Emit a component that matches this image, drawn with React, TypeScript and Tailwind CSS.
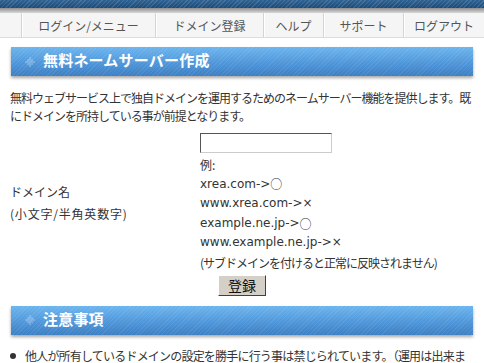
import React from 'react';

const navItems = [
  { label: 'ログイン/メニュー', w: 'w-[134px]' },
  { label: 'ドメイン登録', w: 'w-[108px]' },
  { label: 'ヘルプ', w: 'w-[60px]' },
  { label: 'サポート', w: 'w-[80px]' },
  { label: 'ログアウト', w: 'w-[81px]' },
];

const examples = [
  { text: 'xrea.com->', mark: '○' },
  { text: 'www.xrea.com->', mark: '×' },
  { text: 'example.ne.jp->', mark: '○' },
  { text: 'www.example.ne.jp->', mark: '×' },
];

const DotIcon: React.FC = () => (
  <svg width="10" height="10" viewBox="0 0 10 10" className="shrink-0">
    {[
      [5, 1], [3, 3], [5, 3], [7, 3], [1, 5], [3, 5], [5, 5], [7, 5], [9, 5], [3, 7], [5, 7], [7, 7], [5, 9],
    ].map(([x, y], i) => (
      <rect key={i} x={x - 0.5} y={y - 0.5} width="1" height="1" fill="#e6f2fc" />
    ))}
  </svg>
);

const SectionTitle: React.FC<{ title: string }> = ({ title }) => (
  <div className="mx-[11px] h-[29px] flex items-center gap-[8px] pl-[14px] text-white font-bold text-[15px] shadow-[0_2px_3px_rgba(0,0,0,0.35)] bg-[repeating-linear-gradient(135deg,rgba(255,255,255,0.07)_0px,rgba(255,255,255,0.07)_1px,transparent_1px,transparent_3px),linear-gradient(to_bottom,#6db5ee,#4d94d8_60%,#3d7fc2)]">
    <DotIcon />
    <span className="tracking-[0.2px]">{title}</span>
  </div>
);

const App: React.FC = () => {
  return (
    <div className="w-[484px] h-[363px] overflow-hidden bg-white text-[#333] text-[12px] font-['DejaVu_Sans','Noto_Sans_CJK_JP',sans-serif]">
      {/* top band */}
      <div className="h-[8px] bg-[repeating-linear-gradient(135deg,rgba(255,255,255,0.12)_0px,rgba(255,255,255,0.12)_1px,transparent_1px,transparent_3px),linear-gradient(to_bottom,#2f6394,#1d4a77)]" />
      <div className="h-[5px] bg-[linear-gradient(to_bottom,#8f8f8f,#d8d8d8)]" />

      {/* nav */}
      <div className="h-[25px] flex bg-[#f5f5f5] border-b border-[#dcdcdc] text-[#555] font-['Noto_Sans_CJK_JP',sans-serif]">
        <div className="w-[21px]" />
        {navItems.map((n) => (
          <div
            key={n.label}
            className={`${n.w} flex items-center justify-center pt-[1px] border-l border-[#d4d4d4] shadow-[inset_1px_0_0_#ffffff]`}
          >
            {n.label}
          </div>
        ))}
      </div>

      <div className="h-[9px]" />
      <SectionTitle title="無料ネームサーバー作成" />

      <div className="px-[10px] pt-[13px] leading-[18px] tracking-[-1px] font-['Noto_Sans_CJK_JP',sans-serif]">
        <div className="whitespace-nowrap">
          無料ウェブサービス上で独自ドメインを運用するためのネームサーバー機能を提供します。既
        </div>
        <div className="whitespace-nowrap">にドメインを所持している事が前提となります。</div>
      </div>

      {/* form */}
      <div className="flex mt-[8px]">
        <div className="w-[200px] pl-[10px] flex flex-col justify-center leading-[22px] font-['Noto_Sans_CJK_JP',sans-serif]">
          <span>ドメイン名</span>
          <span className="tracking-[0.8px]">(小文字/半角英数字)</span>
        </div>
        <div className="flex flex-col">
          <input
            type="text"
            className="w-[132px] h-[20px] bg-white border border-t-[#555] border-l-[#555] border-b-[#ccc] border-r-[#ccc] outline-none"
          />
          <div className="leading-[19.6px] mt-[2px]">
            <div className="h-[19.6px] font-['Noto_Sans_CJK_JP',sans-serif]">例:</div>
            {examples.map((e) => (
              <div key={e.text} className="h-[19.6px] flex items-center">
                <span>{e.text}</span>
                {e.mark === '○' ? (
                  <span className="font-['Noto_Sans_CJK_JP',sans-serif] leading-none">○</span>
                ) : (
                  <span>×</span>
                )}
              </div>
            ))}
            <div className="h-[19.6px] font-['Noto_Sans_CJK_JP',sans-serif] tracking-[-1px]">
              (サブドメインを付けると正常に反映されません)
            </div>
          </div>
        </div>
      </div>

      <div className="flex justify-center mt-[2px]">
        <button className="w-[48px] h-[21px] bg-[#d4d0c8] text-[#111] text-[14px] leading-none border border-t-white border-l-white border-b-[#404040] border-r-[#404040] font-['Noto_Sans_CJK_JP',sans-serif]">
          登録
        </button>
      </div>

      <div className="h-[10px]" />
      <SectionTitle title="注意事項" />

      <ul className="mt-[12px] pl-[10px] pr-[6px] font-['Noto_Sans_CJK_JP',sans-serif] tracking-[-0.8px]">
        <li className="flex gap-[9px] leading-[18px] whitespace-nowrap">
          <span className="mt-[6px] w-[6px] h-[6px] rounded-full bg-[#333] shrink-0" />
          <span>他人が所有しているドメインの設定を勝手に行う事は禁じられています。（運用は出来ま</span>
        </li>
      </ul>
    </div>
  );
};

export default App;
